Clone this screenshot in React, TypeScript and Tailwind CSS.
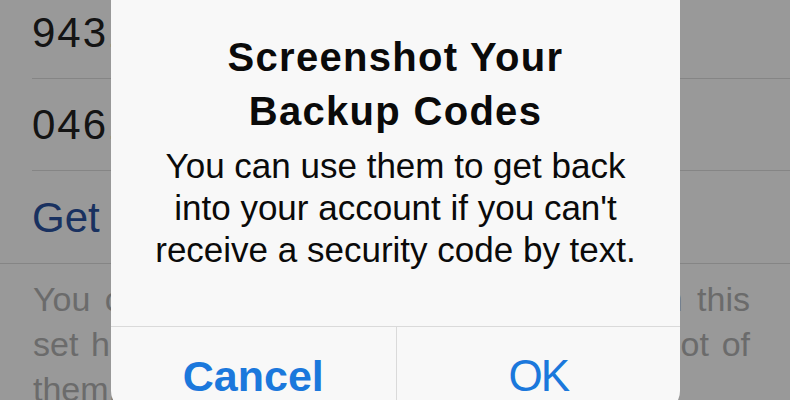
import React from "react";

const codes = ["9431 2807", "0461 5532"];

export default function App() {
    return (
        <div className="relative h-[400px] w-[790px] overflow-hidden bg-white font-['Liberation_Sans',Arial,sans-serif]">
            {/* settings page behind the alert */}
            <div className="-mt-[13px]">
                <div className="border-b border-[#dedede]">
                    <ul className="pl-8">
                        {codes.map((code) => (
                            <li key={code} className="flex h-[92px] items-center border-b border-[#dedede] text-[42px] tracking-[2px] text-[#222]">
                                {code}
                            </li>
                        ))}
                        <li className="flex h-[92px] items-center text-[42px] text-[#2a52a0]">Get New Codes</li>
                    </ul>
                </div>
                <p className="pl-[33px] pr-[40px] pt-[13px] text-justify text-[34px] leading-[45px] text-[#b3b3b3]">
                    You can use each code only once. When this set has been used up, or if you've lost a lot of them, get a new set.
                </p>
            </div>

            {/* dimmed overlay */}
            <div className="absolute inset-0 bg-black/40"></div>

            {/* alert */}
            <div className="absolute left-[111px] top-[-20px] w-[569px] overflow-hidden rounded-[20px] bg-[#f8f8f8] text-center">
                <div className="px-6 pb-[55px] pt-[50px]">
                    <h2 className="text-[40px] font-bold leading-[54px] tracking-[1.3px] text-[#0a0a0a]">
                        Screenshot Your
                        <br />
                        Backup Codes
                    </h2>
                    <p className="mt-[7px] text-[35px] leading-[42px] text-[#0a0a0a]">
                        You can use them to get back
                        <br />
                        into your account if you can't
                        <br />
                        receive a security code by text.
                    </p>
                </div>
                <div className="grid grid-cols-2 border-t border-[#dadada]">
                    <button className="pb-[10px] pt-[24px] text-[43px] font-bold leading-[50px] text-[#1b78dc]">Cancel</button>
                    <button className="border-l border-[#dadada] pb-[10px] pt-[24px] text-[44px] leading-[50px] tracking-[-2px] text-[#1b78dc]">
                        OK
                    </button>
                </div>
            </div>
        </div>
    );
}
